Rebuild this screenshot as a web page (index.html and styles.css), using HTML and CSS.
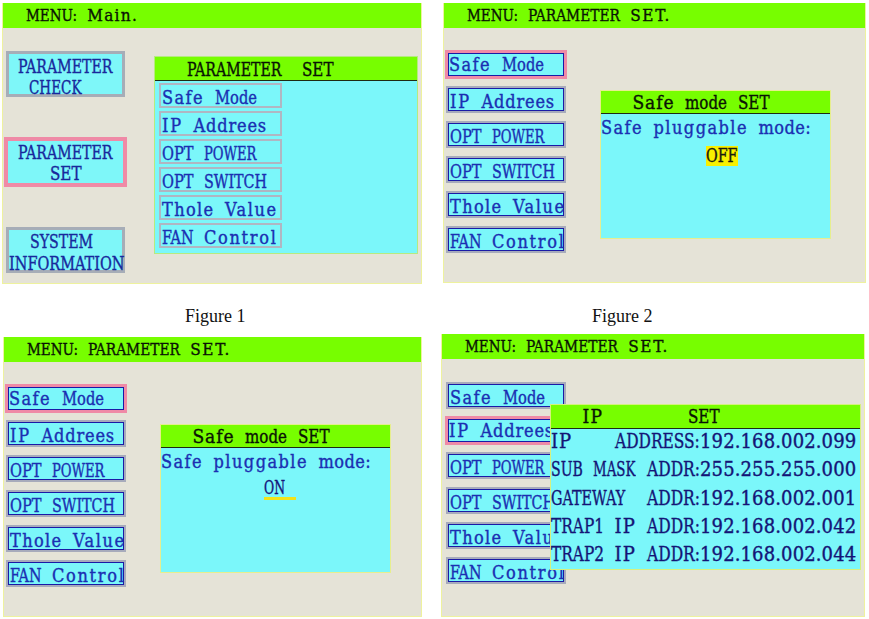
FILE: index.html
```html
<!DOCTYPE html>
<html lang="en">
<head>
<meta charset="utf-8">
<title>LCD menu figures</title>
<link rel="stylesheet" href="styles.css">
</head>
<body>
<main class="sheet">
  <!-- Figure 1 -->
  <section class="screen screen--1 lcd">
    <header class="menu-bar"><span class="t">MENU: Main.</span></header>
    <div class="screen-body">
      <nav class="main-nav">
        <div class="big-btn">
          <div class="ln"><span class="t">PARAMETER</span></div>
          <div class="ln ind-1"><span class="t">CHECK</span></div>
        </div>
        <div class="big-btn is-active">
          <div class="ln"><span class="t">PARAMETER</span></div>
          <div class="ln ind-3"><span class="t">SET</span></div>
        </div>
        <div class="big-btn big-btn--wide">
          <div class="ln ind-2"><span class="t">SYSTEM</span></div>
          <div class="ln"><span class="t">INFORMATION</span></div>
        </div>
      </nav>
      <div class="submenu">
        <div class="box-title box-title--sub"><span class="t">PARAMETER</span><span class="t gap-2">SET</span></div>
        <ul class="submenu-list">
          <li class="submenu-item"><span class="t">Safe Mode</span></li>
          <li class="submenu-item"><span class="t">IP Addrees</span></li>
          <li class="submenu-item"><span class="t">OPT POWER</span></li>
          <li class="submenu-item"><span class="t">OPT SWITCH</span></li>
          <li class="submenu-item"><span class="t">Thole Value</span></li>
          <li class="submenu-item"><span class="t">FAN Control</span></li>
        </ul>
      </div>
    </div>
  </section>

  <!-- Figure 2 -->
  <section class="screen screen--2 lcd">
    <header class="menu-bar"><span class="t">MENU: PARAMETER SET.</span></header>
    <div class="screen-body">
      <ul class="param-list">
        <li class="param-item is-active"><span class="t">Safe Mode</span></li>
        <li class="param-item"><span class="t">IP Addrees</span></li>
        <li class="param-item"><span class="t">OPT POWER</span></li>
        <li class="param-item"><span class="t">OPT SWITCH</span></li>
        <li class="param-item"><span class="t">Thole Value</span></li>
        <li class="param-item"><span class="t">FAN Control</span></li>
      </ul>
      <div class="dialog">
        <div class="box-title box-title--dlg"><span class="t">Safe mode SET</span></div>
        <div class="dialog-label"><span class="t">Safe pluggable mode:</span></div>
        <div class="dialog-value"><span class="value-off"><span class="t">OFF</span></span></div>
      </div>
    </div>
  </section>

  <p class="caption caption--1">Figure 1</p>
  <p class="caption caption--2">Figure 2</p>

  <!-- Figure 3 -->
  <section class="screen screen--3 lcd">
    <header class="menu-bar"><span class="t">MENU: PARAMETER SET.</span></header>
    <div class="screen-body">
      <ul class="param-list">
        <li class="param-item is-active"><span class="t">Safe Mode</span></li>
        <li class="param-item"><span class="t">IP Addrees</span></li>
        <li class="param-item"><span class="t">OPT POWER</span></li>
        <li class="param-item"><span class="t">OPT SWITCH</span></li>
        <li class="param-item"><span class="t">Thole Value</span></li>
        <li class="param-item"><span class="t">FAN Control</span></li>
      </ul>
      <div class="dialog">
        <div class="box-title box-title--dlg"><span class="t">Safe mode SET</span></div>
        <div class="dialog-label"><span class="t">Safe pluggable mode:</span></div>
        <div class="dialog-value dialog-value--on"><span class="value-on"><span class="t">ON</span></span></div>
      </div>
    </div>
  </section>

  <!-- Figure 4 -->
  <section class="screen screen--4 lcd">
    <header class="menu-bar"><span class="t">MENU: PARAMETER SET.</span></header>
    <div class="screen-body">
      <ul class="param-list param-list--wide">
        <li class="param-item"><span class="t">Safe Mode</span></li>
        <li class="param-item is-active"><span class="t">IP Addrees</span></li>
        <li class="param-item"><span class="t">OPT POWER</span></li>
        <li class="param-item"><span class="t">OPT SWITCH</span></li>
        <li class="param-item"><span class="t">Thole Value</span></li>
        <li class="param-item"><span class="t">FAN Control</span></li>
      </ul>
    </div>
    <div class="ip-dialog">
      <div class="box-title box-title--ip"><span class="t">IP</span><span class="t gap-8">SET</span></div>
      <ul class="ip-rows">
        <li class="ip-row"><span class="ip-label"><span class="t">IP</span><span class="t">ADDRESS:</span></span><span class="t ip-val">192.168.002.099</span></li>
        <li class="ip-row"><span class="ip-label"><span class="t">SUB MASK</span><span class="t">ADDR:</span></span><span class="t ip-val">255.255.255.000</span></li>
        <li class="ip-row"><span class="ip-label"><span class="t">GATEWAY</span><span class="t">ADDR:</span></span><span class="t ip-val">192.168.002.001</span></li>
        <li class="ip-row"><span class="ip-label"><span class="t">TRAP1 IP</span><span class="t">ADDR:</span></span><span class="t ip-val">192.168.002.042</span></li>
        <li class="ip-row"><span class="ip-label"><span class="t">TRAP2 IP</span><span class="t">ADDR:</span></span><span class="t ip-val">192.168.002.044</span></li>
      </ul>
    </div>
  </section>
</main>
<script src="app.js"></script>
</body>
</html>
```

FILE: styles.css
```css
* { box-sizing: border-box; }

html, body {
  margin: 0;
  padding: 0;
  background: #ffffff;
}

.sheet {
  display: grid;
  grid-template-columns: 440px 429px;
  grid-template-rows: 284px 50px 285px;
  width: 869px;
  height: 619px;
  overflow: hidden;
}

/* ---------- LCD font: text runs are fitted to a fixed character pitch ---------- */
.lcd {
  --cw: 10.5px;
  font-family: "DejaVu Serif Condensed", "DejaVu Serif", serif;
  font-size: 18px;
  -webkit-text-stroke: 0.35px currentColor;
}
.t {
  display: inline-block;
  white-space: pre;
}
.t .w {
  display: inline-block;
  white-space: pre;
  transform-origin: 0 50%;
}
.t .sp {
  display: inline-block;
  white-space: pre;
}
.ind-1 { padding-left: calc(var(--cw) * 1); }
.ind-2 { padding-left: calc(var(--cw) * 2); }
.ind-3 { padding-left: calc(var(--cw) * 3); }
.gap-2 { margin-left: calc(var(--cw) * 2); }
.gap-8 { margin-left: calc(var(--cw) * 8); }

/* ---------- screen frame ---------- */
.screen {
  position: relative;
  background: #e5e3d7;
  border: 1px solid #eef29e;
  border-top: 0;
  display: flex;
  flex-direction: column;
}
.screen--1 { margin: 3px 0 0 2px; width: 420px; height: 281px; }
.screen--2 { margin: 3px 0 0 3px; width: 423px; height: 280px; }
.screen--3 { margin: 3px 0 0 3px; width: 419px; height: 280px; }
.screen--4 { margin: 0 0 0 1px; width: 424px; height: 283px; }

.menu-bar {
  --cw: 10.2px;
  height: 25px;
  flex: none;
  background: #77fe00;
  color: #0a1404;
  font-size: 17px;
  line-height: 24px;
  padding-left: 23px;
}

.screen-body {
  display: flex;
  align-items: flex-start;
  flex: 1;
}

/* ---------- Figure 1 ---------- */
.main-nav {
  display: flex;
  flex-direction: column;
  gap: 42px;
  padding: 23px 0 0 3px;
}

.big-btn {
  width: 119px;
  height: 46px;
  border: 3px solid #a6adb7;
  background: #7ef7f9;
  color: #18289c;
  font-size: 19px;
  line-height: 21px;
  padding: 2px 0 0 9px;
}
.big-btn--wide { padding: 0; line-height: 22px; }
.big-btn.is-active {
  width: 123px;
  height: 50px;
  margin: -2px;
  border: 4px solid #ef8aa6;
  padding: 1px 0 0 10px;
}

.submenu {
  margin: 28px 0 0 29px;
  width: 264px;
  height: 198px;
  border: 1px solid #b6ea80;
  background: #7bf7fa;
}

.box-title {
  background: #77fe00;
  border-bottom: 1px solid #1e2a14;
  color: #0a1404;
  font-size: 19px;
}
.box-title--sub {
  height: 24px;
  line-height: 22px;
  padding: 1px 0 0 calc(var(--cw) * 3);
}
.box-title--dlg {
  height: 23px;
  line-height: 22px;
  padding-left: calc(var(--cw) * 3);
}
.box-title--ip {
  height: 24px;
  line-height: 23px;
  padding-left: calc(var(--cw) * 3);
}

.submenu-list {
  list-style: none;
  margin: 0;
  padding: 2px 0 0 4px;
  display: flex;
  flex-direction: column;
  gap: 3px;
}
.submenu-item {
  width: 123px;
  height: 25px;
  border: 2px solid #b0b6c2;
  background: #7bf7fa;
  color: #1b2fb2;
  line-height: 21px;
  padding: 2px 0 0 1px;
}

/* ---------- Figures 2-4 ---------- */
.param-list {
  list-style: none;
  margin: 0;
  padding: 23px 0 0 2px;
  display: flex;
  flex-direction: column;
  gap: 8px;
  flex: none;
}
.param-list--wide { padding-left: 4px; }

.param-item {
  width: 120px;
  height: 27px;
  border: 2px solid #a7abbb;
  box-shadow: inset 0 0 0 1px #1a1aa6;
  background: #7bf7fa;
  color: #1b2fb2;
  line-height: 23px;
  padding: 2px 0 0 2px;
}
.param-item.is-active {
  width: 122px;
  height: 29px;
  margin: -1px;
  border: 3px solid #ef8aa6;
  padding: 0 0 0 1px;
}

.dialog {
  margin: 62px 0 0 34px;
  width: 231px;
  height: 149px;
  border: 1px solid #e6ee8e;
  background: #7bf7fa;
}

.dialog-label {
  color: #1b2fb2;
  line-height: 24px;
  padding-top: 2px;
}

.dialog-value {
  padding: 6px 0 0 calc(var(--cw) * 10);
  line-height: 20px;
}
.value-off {
  display: inline-block;
  width: 32px;
  height: 20px;
  background: #f8f000;
  color: #1a1a10;
}
.dialog-value--on { padding: 0 0 0 103px; }
.value-on {
  display: inline-block;
  width: 32px;
  height: 26px;
  padding-top: 4px;
  border-bottom: 3px solid #f2e218;
  color: #14147a;
}

.ip-dialog {
  position: absolute;
  left: 108px;
  top: 70px;
  width: 311px;
  height: 166px;
  border: 1px solid #d6f07e;
  background: #7bf7fa;
}

.ip-rows {
  list-style: none;
  margin: -2px 0 0;
  padding: 0;
}
.ip-row {
  height: 28.35px;
  line-height: 28.35px;
  color: #141476;
  font-size: 20px;
  display: flex;
  align-items: baseline;
}
.ip-label {
  --cw: 10.6px;
  display: flex;
  justify-content: space-between;
  width: 149px;
}
.ip-val { --cw: 10.42px; }

/* ---------- captions ---------- */
.caption {
  margin: 0;
  padding-top: 22px;
  font-family: "Liberation Serif", "Times New Roman", serif;
  font-size: 18px;
  line-height: 20px;
  color: #111111;
}
.caption--1 { padding-left: 185px; }
.caption--2 { padding-left: 152px; }
```

FILE: app.js
```js
// The LCD uses a fixed character pitch (--cw). Each word of a text run is
// fitted to that pitch (wide words are condensed, narrow ones letter-spaced)
// and runs of spaces take exactly one pitch per space.
function fitWord(w, cw) {
  w.style.letterSpacing = '0px';
  w.style.transform = '';
  w.style.marginRight = '';
  var n = w.textContent.length;
  var target = n * cw;
  var width = w.getBoundingClientRect().width;
  if (width > target) {
    w.style.transform = 'scaleX(' + (target / width).toFixed(4) + ')';
    w.style.marginRight = (target - width).toFixed(2) + 'px';
  } else {
    w.style.letterSpacing = ((target - width) / n).toFixed(3) + 'px';
  }
}

function fitRuns() {
  document.querySelectorAll('.t').forEach(function (el) {
    var cw = parseFloat(getComputedStyle(el).getPropertyValue('--cw')) || 10.5;
    if (!el.querySelector('.w')) {
      var txt = el.textContent;
      el.textContent = '';
      txt.split(/( +)/).forEach(function (part) {
        if (!part) return;
        var s = document.createElement('span');
        s.textContent = part;
        s.className = part.charAt(0) === ' ' ? 'sp' : 'w';
        el.appendChild(s);
      });
    }
    el.querySelectorAll('.sp').forEach(function (s) {
      s.style.width = (s.textContent.length * cw).toFixed(2) + 'px';
    });
    el.querySelectorAll('.w').forEach(function (w) { fitWord(w, cw); });
  });
}

fitRuns();
if (document.fonts && document.fonts.ready) {
  document.fonts.ready.then(fitRuns);
}
```
